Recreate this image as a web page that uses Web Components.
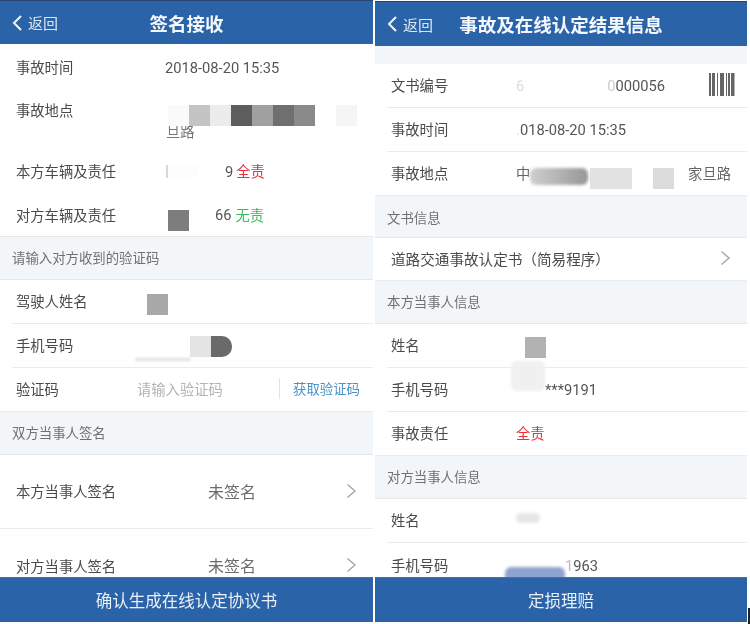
<!DOCTYPE html>
<html lang="zh">
<head>
<meta charset="utf-8">
<title>签名接收</title>
<style>
html, body { margin: 0; padding: 0; background: #fff; }
body { width: 750px; height: 624px; overflow: hidden; font-family: "Noto Sans CJK SC", "Roboto", sans-serif; }
#page { display: flex; height: 624px; }
</style>
</head>
<body>
<div id="page">
  <phone-screen style="width:373px;margin-right:2px" nav-height="43" nav-top="1" heading="签名接收" action="确认生成在线认定协议书">
    <info-row label="事故时间" height="45" flat><span class="num">2018-08-20 15:35</span></info-row>
    <info-row label="事故地点" height="60" flat top>
      <span style="display:block;margin-top:21px;margin-left:1px;color:#777">旦路</span>
      <mosaic-block x="3" y="16" cells="21:#fafafa,21:#c4c4c4,21:#ececec,21:#5d5d5d,21:#a0a0a0,21:#6f6f6f,21:#8a8a8a,21:#fff,21:#f5f5f5"></mosaic-block>
    </info-row>
    <info-row label="本方车辆及责任" height="43" flat>
      <span class="num" style="margin-left:60px">9</span><span style="color:#e5323a;margin-left:3px">全责</span>
      <mosaic-block x="1" y="16" cells="2:#d8d8d8,30:#fdfdfd" short></mosaic-block>
    </info-row>
    <info-row label="对方车辆及责任" height="44" flat>
      <span class="num" style="margin-left:50px">66</span><span style="color:#3dbb62;margin-left:4px">无责</span>
      <mosaic-block x="3" y="18" cells="21:#7d7d7d"></mosaic-block>
    </info-row>
    <section-head style="border-top:1px solid #e4e8eb;height:44px;padding-bottom:3px">请输入对方收到的验证码</section-head>
    <info-row label="驾驶人姓名" height="44" lift><mosaic-block x="-18" y="14" cells="21:#a8a8a8"></mosaic-block></info-row>
    <info-row label="手机号码" height="44" lift>
      <mosaic-block x="25" y="12" cells="21:#e4e4e4,21:#6a6a6a" round></mosaic-block>
      <smudge-mark x="-30" y="34" w="56" h="3" color="#ddd"></smudge-mark>
    </info-row>
    <info-row label="验证码" height="44" full lift>
      <code-input placeholder="请输入验证码" link="获取验证码"></code-input>
    </info-row>
    <section-head style="padding-bottom:2px">双方当事人签名</section-head>
    <info-row label="本方当事人签名" height="74" chevron full lift>
      <span style="margin-left:43px;font-size:16px;color:#6b6b6b">未签名</span>
    </info-row>
    <info-row label="对方当事人签名" height="72" chevron flat>
      <span style="margin-left:43px;font-size:16px;color:#6b6b6b">未签名</span>
    </info-row>
  </phone-screen>

  <phone-screen style="width:372px" nav-height="44" nav-top="2" heading="事故及在线认定结果信息" action="定损理赔" gap="18">
    <info-row label="文书编号" height="44" value-x="141" lift>
      <span class="num" style="color:#ddd">6</span><span class="num" style="margin-left:83px"><span style="color:#ccc">0</span>000056</span>
      <bar-code></bar-code>
    </info-row>
    <info-row label="事故时间" height="44" value-x="141" lift><span class="num"><span style="color:#ddd">.</span>018-08-20 15:35</span></info-row>
    <info-row label="事故地点" height="44" value-x="141" full lift>
      <span style="display:flex;justify-content:space-between;width:216px;color:#666"><span>中</span><span>家旦路</span></span>
      <smudge-mark x="14" y="16" w="58" h="17" color="linear-gradient(90deg,#cfcfcf,#979797)"></smudge-mark>
      <mosaic-block x="74" y="16" cells="42:#e2e2e2,21:#fff,21:#dcdcdc"></mosaic-block>
    </info-row>
    <section-head style="height:42px">文书信息</section-head>
    <info-row label="道路交通事故认定书（简易程序）" height="43" chevron full wide lift></info-row>
    <section-head style="padding-bottom:2px">本方当事人信息</section-head>
    <info-row label="姓名" height="44" value-x="141" lift><mosaic-block x="9" y="13" cells="21:#b2b2b2"></mosaic-block></info-row>
    <info-row label="手机号码" height="44" value-x="141" lift>
      <span class="num" style="margin-left:29px">***9191</span>
      <smudge-mark x="-5" y="-7" w="34" h="30" color="#f0f0f0"></smudge-mark>
    </info-row>
    <info-row label="事故责任" height="44" value-x="141" full lift><span style="color:#e5323a">全责</span></info-row>
    <section-head style="padding-bottom:2px">对方当事人信息</section-head>
    <info-row label="姓名" height="44" value-x="141" lift><smudge-mark x="0" y="14" w="24" h="10" color="#e6e6e6"></smudge-mark></info-row>
    <info-row label="手机号码" height="43" value-x="141" flat>
      <span class="num" style="margin-left:49px"><span style="color:#bbb">1</span>963</span>
      <smudge-mark x="-11" y="24" w="60" h="22" color="#8fa3cf"></smudge-mark>
    </info-row>
  </phone-screen>

  <corner-tick></corner-tick>
</div>

<script>
const CHEVRON = '<svg width="11" height="16" viewBox="0 0 11 16"><path d="M1.5 1.5 9 8l-7.500 6.500" fill="none" stroke="#a9a9a9" stroke-width="1.500"/></svg>';

class PhoneScreen extends HTMLElement {
    connectedCallback() {
        const navHeight = this.getAttribute('nav-height');
        const navTop = this.getAttribute('nav-top');
        const gap = this.getAttribute('gap') || 0;
        this.attachShadow({ mode: 'open' }).innerHTML = `
            <style>
                :host { display: flex; flex-direction: column; height: 623px; flex: none; overflow: hidden; background: #fff; color: #4a4a4a; filter: blur(.35px); }
                .nav { flex: none; margin-top: ${navTop - 1}px; border-top: 1px solid #26466f; height: ${navHeight}px; background: #2b63a8; color: #fff; display: grid; grid-template-columns: 1fr auto 1fr; align-items: center; }
                .back { display: flex; align-items: center; gap: 6px; padding-left: 12px; font-size: 15px; color: #dbe6f3; }
                .back svg { display: block; }
                h1 { margin: 0; font-size: 18.500px; font-weight: 700; color: #f4f7fb; white-space: nowrap; }
                .body { flex: 1; min-height: 0; overflow: hidden; }
                .gap { height: ${gap}px; background: #f3f6f8; }
                .action { flex: none; height: 44px; margin-bottom: 1px; background: #2b63a8; border-top: 1px solid #3a72b6; color: #e8f0f8; font-size: 16.500px; display: flex; align-items: center; justify-content: center; }
            </style>
            <div class="nav">
                <div class="back"><svg width="10" height="16" viewBox="0 0 10 16"><path d="M9 1 2 8l7 7" fill="none" stroke="#f2f6fb" stroke-width="2"/></svg>返回</div>
                <h1>${this.getAttribute('heading')}</h1>
                <div></div>
            </div>
            <div class="body"><div class="gap"></div><slot></slot></div>
            <div class="action">${this.getAttribute('action')}</div>
        `;
    }
}

class InfoRow extends HTMLElement {
    connectedCallback() {
        const valueX = this.getAttribute('value-x') || 165;
        const height = this.getAttribute('height');
        const flat = this.hasAttribute('flat');
        const full = this.hasAttribute('full');
        const wide = this.hasAttribute('wide');
        const top = this.hasAttribute('top');
        this.attachShadow({ mode: 'open' }).innerHTML = `
            <style>
                :host { display: block; background: #fff; }
                .row { box-sizing: border-box; height: ${height}px; margin-left: ${full || flat ? 0 : 12}px; padding-left: ${full || flat ? 16 : 4}px; padding-right: 16px; padding-bottom: ${this.hasAttribute('lift') ? 2 : 0}px; display: flex; align-items: ${top ? 'flex-start' : 'center'}; border-bottom: ${flat ? 0 : 1}px solid #e9ecee; font-size: 14.300px; color: #4a4a4a; }
                .label { flex: none; width: ${wide ? 'auto' : (valueX - 16) + 'px'}; font-size: ${wide ? '14.600px' : 'inherit'}; white-space: nowrap; padding-top: ${top ? '10px' : 0}; }
                .value { flex: 1; min-width: 0; align-self: stretch; position: relative; display: flex; align-items: ${top ? 'flex-start' : 'center'}; flex-wrap: ${top ? 'wrap' : 'nowrap'}; padding-top: ${top ? '10px' : 0}; box-sizing: border-box; }
                .chev { margin-left: auto; flex: none; display: block; line-height: 0; }
                ::slotted(.num) { font-family: Roboto, sans-serif; font-size: 14.700px; color: #555; white-space: nowrap; padding-top: 2px; }
            </style>
            <div class="row">
                <div class="label">${this.getAttribute('label')}</div>
                <div class="value"><slot></slot></div>
                ${this.hasAttribute('chevron') ? `<div class="chev">${CHEVRON}</div>` : ''}
            </div>
        `;
    }
}

class SectionHead extends HTMLElement {
    constructor() {
        super();
        this.attachShadow({ mode: 'open' }).innerHTML = `
            <style>
                :host { display: flex; align-items: center; box-sizing: border-box; height: 43px; padding-left: 12px; background: #f3f6f8; border-bottom: 1px solid #e4e8eb; font-size: 13.400px; color: #707070; }
            </style>
            <slot></slot>
        `;
    }
}

// pixelated privacy mosaic lying over the value text
class MosaicBlock extends HTMLElement {
    connectedCallback() {
        const cells = this.getAttribute('cells').split(',').map((c) => c.split(':'));
        const html = cells.map(([w, color]) => `<i style="width:${w}px;background:${color}"></i>`).join('');
        const h = this.hasAttribute('short') ? 13 : 21;
        this.attachShadow({ mode: 'open' }).innerHTML = `
            <style>
                :host { position: absolute; left: ${this.getAttribute('x')}px; top: ${this.getAttribute('y')}px; display: flex; height: ${h}px; }
                i { display: block; height: ${h}px; }
                i:last-child { border-radius: ${this.hasAttribute('round') ? '0 10px 10px 0' : '0'}; }
            </style>
            ${html}
        `;
    }
}

class SmudgeMark extends HTMLElement {
    connectedCallback() {
        const attr = (name) => this.getAttribute(name);
        this.attachShadow({ mode: 'open' }).innerHTML = `
            <style>
                :host { position: absolute; left: ${attr('x')}px; top: ${attr('y')}px; width: ${attr('w')}px; height: ${attr('h')}px; background: ${attr('color')}; border-radius: 6px; filter: blur(1.500px); }
            </style>
        `;
    }
}

class CodeInput extends HTMLElement {
    connectedCallback() {
        this.attachShadow({ mode: 'open' }).innerHTML = `
            <style>
                :host { display: flex; flex: none; align-items: center; width: 223px; margin-left: -28px; }
                .hint { flex: 1; font-size: 14.300px; color: #b4b4b4; }
                .link { border-left: 1px solid #dfe3e6; padding-left: 13px; height: 21px; line-height: 21px; font-size: 13.400px; color: #4a93c9; white-space: nowrap; }
            </style>
            <span class="hint">${this.getAttribute('placeholder')}</span>
            <span class="link">${this.getAttribute('link')}</span>
        `;
    }
}

class BarCode extends HTMLElement {
    constructor() {
        super();
        const bars = [[0, 2], [3, 3], [8, 1], [11, 4], [17, 1], [19, 2], [22, 3.500]];
        const rects = bars.map(([x, w]) => `<rect x="${x}" y="0" width="${w}" height="23" fill="#666"/>`).join('');
        this.attachShadow({ mode: 'open' }).innerHTML = `
            <style>
                :host { position: absolute; left: 193px; top: 9px; display: block; line-height: 0; }
            </style>
            <svg width="27" height="23" viewBox="0 0 27 23">${rects}</svg>
        `;
    }
}

class CornerTick extends HTMLElement {
    constructor() {
        super();
        this.attachShadow({ mode: 'open' }).innerHTML = `
            <style>
                :host { display: block; align-self: flex-end; width: 2px; height: 16px; margin-left: 1px; background: #222; }
            </style>
        `;
    }
}

customElements.define('phone-screen', PhoneScreen);
customElements.define('info-row', InfoRow);
customElements.define('section-head', SectionHead);
customElements.define('mosaic-block', MosaicBlock);
customElements.define('smudge-mark', SmudgeMark);
customElements.define('code-input', CodeInput);
customElements.define('bar-code', BarCode);
customElements.define('corner-tick', CornerTick);
</script>
</body>
</html>
